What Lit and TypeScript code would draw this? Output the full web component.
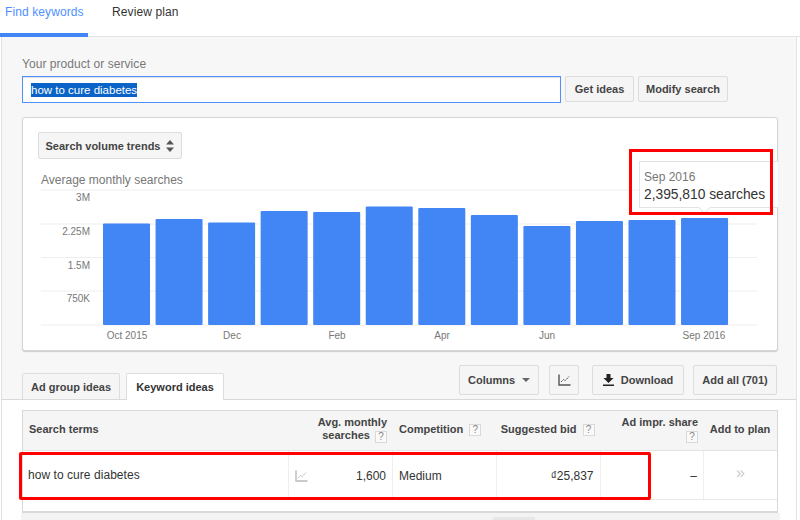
import { LitElement, html, css, svg } from "lit";
import { customElement } from "lit/decorators.js";

const tops = [223.5, 219, 222.5, 211, 212, 206.5, 208, 215, 226, 221, 220, 218];
const grid = [190, 224, 257.5, 291, 325];
const yLabels: [string, number][] = [["3M", 201], ["2.25M", 235], ["1.5M", 269], ["750K", 302]];
const xLabels: [string, number][] = [["Oct 2015", 127], ["Dec", 232], ["Feb", 337], ["Apr", 442], ["Jun", 547], ["Sep 2016", 704]];

const chartIcon = (c: string) => html`<svg width="13" height="12" viewBox="0 0 13 12"><path d="M1 0.5V11H12.5" fill="none" stroke="${c}" stroke-width="1.4"/><path d="M3 8L5.5 5.5L7 6.8L11 2.5" fill="none" stroke="${c}" stroke-width="1" stroke-dasharray="2 .6"/></svg>`;
const q = html`<span class="q">?</span>`;

@customElement("app-root")
export class AppRoot extends LitElement {
  static styles = css`
    :host { display: block; position: relative; width: 800px; height: 520px; overflow: hidden; background: #fff;
      font-family: "Liberation Sans", Arial, sans-serif; font-size: 13px; color: #333; }
    * { box-sizing: border-box; }
    .tabs { display: flex; height: 37px; border-bottom: 1px solid #e3e3e3; }
    .tab { height: 37px; display: flex; align-items: flex-start; padding-top: 5px; font-size: 12px; letter-spacing: .1px; }
    .tab.on { width: 88px; padding-left: 5px; color: #4d90fe; border-bottom: 4px solid #4285f4; margin-right: 24px; }
    .top { height: 362px; width: 796px; margin-left: 1px; background: #f7f7f7; border-left: 1px solid #e3e3e3; border-right: 1px solid #e3e3e3; padding: 20px 0 0 20px; position: relative; z-index: 1; }
    .label { color: #777; font-size: 12px; letter-spacing: .05px; line-height: 15px; margin-bottom: 4px; }
    .search { display: flex; gap: 4px; height: 27px; margin-bottom: 14px; }
    .input { width: 539px; height: 27px; background: #fff; border: 1px solid #4d90fe; padding-left: 8px; display: flex; align-items: center; font-size: 11.5px; box-shadow: inset 0 1px 1px #ddd; }
    .sel { background: #0a64c8; color: #fff; line-height: 14px; height: 14px; }
    .btn { display: flex; align-items: center; justify-content: center; gap: 7px; background: #f5f5f5; border: 1px solid #dcdcdc; border-radius: 2px; color: #444; font-weight: 700; font-size: 11px; }
    .get { width: 69px; height: 26px; }
    .mod { width: 90px; height: 26px; }
    .card { position: relative; width: 756px; height: 234px; background: #fff; border: 1px solid #d5d5d5; border-radius: 3px; box-shadow: 0 1px 1px #ccc; padding: 14px 0 0 15px; }
    .vol { width: 144px; height: 27px; gap: 6px; }
    .avg { color: #777; font-size: 12px; line-height: 14px; margin: 14px 0 0 3px; }
    svg.plot { position: absolute; left: -1px; top: -1px; }
    svg.plot text { font-family: "Liberation Sans", Arial, sans-serif; font-size: 10px; fill: #777; }
    .tip { position: absolute; left: 616px; top: 43px; width: 139px; height: 47px; background: #fff; border: 1px solid #e3e3e3; border-right: 0; padding: 8px 0 0 4px; }
    .tip::after { content: ""; position: absolute; left: 60px; bottom: -5px; width: 8px; height: 8px; background: #fff; border-right: 1px solid #e3e3e3; border-bottom: 1px solid #e3e3e3; transform: rotate(45deg); }
    .tip-d { color: #777; font-size: 12px; line-height: 15px; }
    .tip-v { color: #333; font-size: 13.8px; line-height: 20px; white-space: nowrap; }
    .bar { display: flex; align-items: flex-end; justify-content: space-between; width: 755px; height: 34px; margin-top: 14px; }
    .subtabs { display: flex; gap: 6px; align-self: flex-end; }
    .st { width: 98px; height: 26px; background: #f5f5f5; border: 1px solid #ddd; border-bottom: 0; border-radius: 2px 2px 0 0; display: flex; align-items: center; justify-content: center; font-weight: 700; font-size: 11px; color: #444; }
    .st.on { background: #fff; height: 27px; margin-bottom: -1px; color: #333; position: relative; }
    .tools { display: flex; gap: 10px; height: 30px; align-self: flex-start; }
    .tools .btn { height: 30px; }
    .caret { width: 0; height: 0; border: 4px solid transparent; border-top-color: #666; border-bottom: 0; }
    .bottom { padding: 10px 0 0 20px; width: 796px; margin-left: 1px; background: #fff; height: 121px; position: relative; border: 1px solid #e3e3e3; border-top-color: #d9d9d9; border-bottom: 0; }
    .table { width: 756px; height: 103px; border: 1px solid #d9d9d9; border-width: 1px 1px 2px 1px; }
    .row { display: grid; grid-template-columns: 265px 104px 103.5px 104px 103.5px 1fr; }
    .head { height: 40px; background: #f5f5f5; border-bottom: 1px solid #e3e3e3; font-weight: 700; font-size: 11px; color: #444; line-height: 13px; white-space: nowrap; }
    .head > div { display: flex; align-items: center; padding: 0 5px 2px; gap: 4px; }
    .head > div:first-child { padding-left: 6px; }
    .head > div.comp { padding-left: 7px; }
    .head > div.r { justify-content: flex-end; text-align: right; }
    .stack { display: block; }
    .q { display: inline-block; width: 12px; height: 12px; line-height: 10px; border: 1px solid #d9d9d9; background: #fafafa; color: #888; font-weight: 400; font-size: 10px; text-align: center; vertical-align: middle; margin-left: 2px; }
    .data { height: 49px; border-bottom: 1px solid #e8e8e8; font-size: 12px; color: #333; }
    .data > div { display: flex; align-items: center; border-left: 1px solid #efefef; padding: 1px 6px 0; }
    .data > div:first-child { border-left: 0; padding: 0 0 0 5px; letter-spacing: .05px; }
    .vol-c { justify-content: space-between; }
    .r { justify-content: flex-end; }
    .add { justify-content: center; color: #ccc; font-size: 16px; padding-bottom: 5px !important; }
    .strip { height: 7px; margin-left: -1px; width: 759px; background: #f3f3f3; position: relative; }
    .pager { position: absolute; left: 472px; top: 4px; width: 42px; height: 3px; background: #e6e6e6; border-radius: 2px 2px 0 0; }
    .red { position: absolute; z-index: 2; border: 3px solid #f00; pointer-events: none; }
    .red.a { left: 629px; top: 149px; width: 143.5px; height: 66px; }
    .red.b { left: 19px; top: 452px; width: 632px; height: 48px; border-radius: 2px; }
  `;

  render() {
    return html`
      <div class="tabs">
        <div class="tab on">Find keywords</div>
        <div class="tab">Review plan</div>
      </div>
      <div class="top">
        <div class="label">Your product or service</div>
        <div class="search">
          <div class="input"><span class="sel">how to cure diabetes</span></div>
          <div class="btn get">Get ideas</div>
          <div class="btn mod">Modify search</div>
        </div>
        <div class="card">
          <svg class="plot" width="756" height="234" viewBox="22 117 756 234">
            ${grid.map((y) => svg`<line x1="41" x2="757" y1=${y} y2=${y} stroke="#eeeeee" stroke-width="1"/>`)}
            ${tops.map((t, i) => svg`<rect x=${103 + i * 52.55} y=${t} width="47" height=${325 - t} rx="1" fill="#4285f4"/>`)}
            ${yLabels.map(([s, y]) => svg`<text x="90" y=${y} text-anchor="end">${s}</text>`)}
            ${xLabels.map(([s, x]) => svg`<text x=${x} y="339" text-anchor="middle">${s}</text>`)}
          </svg>
          <div class="btn vol" style="position:relative">Search volume trends
            <svg width="8" height="12" viewBox="0 0 8 12"><path d="M4 0L8 4.5H0ZM4 12L0 7.5H8Z" fill="#555"/></svg>
          </div>
          <div class="avg" style="position:relative">Average monthly searches</div>
          <div class="tip">
            <div class="tip-d">Sep 2016</div>
            <div class="tip-v">2,395,810 searches</div>
          </div>
        </div>
        <div class="bar">
          <div class="subtabs">
            <div class="st">Ad group ideas</div>
            <div class="st on">Keyword ideas</div>
          </div>
          <div class="tools">
            <div class="btn" style="width:80px">Columns <span class="caret"></span></div>
            <div class="btn" style="width:30px">${chartIcon("#555")}</div>
            <div class="btn" style="width:92px;margin-left:3px">
              <svg width="11" height="12" viewBox="0 0 11 12"><path d="M3.5 0H7.5V4H10.5L5.5 9L.5 4H3.5ZM0 10.6H11V12H0Z" fill="#222"/></svg>
              Download
            </div>
            <div class="btn" style="width:84px;margin-left:-1px">Add all (701)</div>
          </div>
        </div>
      </div>
      <div class="bottom">
        <div class="table">
          <div class="row head">
            <div>Search terms</div>
            <div class="r"><span class="stack">Avg. monthly<br />searches ${q}</span></div>
            <div class="comp">Competition ${q}</div>
            <div class="r">Suggested bid ${q}</div>
            <div class="r"><span class="stack">Ad impr. share<br />${q}</span></div>
            <div style="justify-content:center">Add to plan</div>
          </div>
          <div class="row data">
            <div>how to cure diabetes</div>
            <div class="vol-c">${chartIcon("#bbb")}<span>1,600</span></div>
            <div>Medium</div>
            <div class="r">₫25,837</div>
            <div class="r">–</div>
            <div class="add">»</div>
          </div>
        </div>
        <div class="strip"><div class="pager"></div></div>
      </div>
      <div class="red a"></div>
      <div class="red b"></div>
    `;
  }
}
